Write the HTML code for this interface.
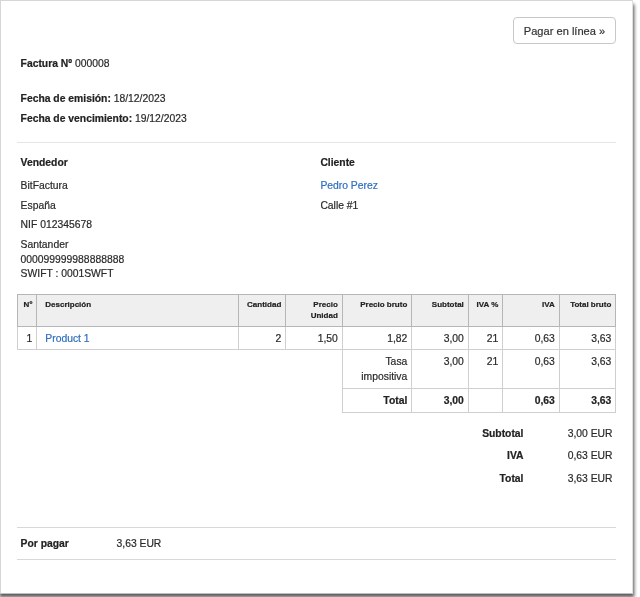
<!DOCTYPE html>
<html lang="es">
<head>
<meta charset="utf-8">
<title>Factura 000008</title>
<style>
html,body{margin:0;padding:0;background:#fff;}
body{-webkit-text-stroke:0.2px;position:relative;width:640px;height:597px;overflow:hidden;font-family:"Liberation Sans",Arial,Helvetica,sans-serif;font-size:10.35px;color:#2a2a2a;line-height:14.6px;}
.shadow{position:absolute;left:-3px;top:0;width:636px;height:594px;background:#fff;box-shadow:1.5px 3.5px 3.5px rgba(0,0,0,.65);}
.page{position:absolute;left:0;top:0;width:631px;height:592px;background:#fff;border:1px solid #d6d6d6;border-right-color:#e0e0e0;border-bottom-color:#bebebe;}
.wrap{position:absolute;left:0;top:0;width:640px;height:597px;will-change:transform;}
.abs{position:absolute;white-space:nowrap;}
b{font-weight:bold;color:#222;}
a{color:#2f6fbd;text-decoration:none;}
.btn{position:absolute;left:513px;top:17px;width:101px;height:25px;border:1px solid #c8c8c8;border-radius:4px;background:#fff;font-size:11.1px;line-height:27px;text-align:center;color:#333;}
.hr{position:absolute;left:17px;width:599px;height:1px;background:#e5e5e5;}
.hr.f{background:#d8d8d8;}
table.items{position:absolute;left:17px;top:294px;width:598px;border-collapse:collapse;table-layout:fixed;}
table.items th,table.items td{border:1px solid #cfcfcf;padding:0 3.7px 0 0;text-align:right;vertical-align:top;font-weight:normal;overflow:hidden;}
table.items th{background:#efefef;border-color:#b6b6b6;font-weight:bold;font-size:8px;line-height:10.9px;color:#222;padding-top:4.8px;}
table.items td{padding-top:4.5px;}
table.items td.l,table.items th.l{text-align:left;padding-left:8.3px;}
table.items td.none{border:none;}
table.items .p{padding-right:4.2px;}
table.items td.tasa{line-height:15px;padding-top:4.3px;}
table.items tr.tot td{font-weight:bold;color:#222;}
</style>
</head>
<body>
<div class="wrap">
<div class="shadow"></div>
<div class="page"></div>
<div class="btn">Pagar en línea »</div>

<div class="abs" style="left:20.6px;top:56.8px;"><b>Factura Nº</b> 000008</div>
<div class="abs" style="left:20.6px;top:91.7px;"><b>Fecha de emisión:</b> 18/12/2023</div>
<div class="abs" style="left:20.6px;top:111.7px;"><b>Fecha de vencimiento:</b> 19/12/2023</div>

<div class="hr" style="top:142px;"></div>

<div class="abs" style="left:20.6px;top:156.0px;"><b>Vendedor</b></div>
<div class="abs" style="left:20.6px;top:179.0px;">BitFactura</div>
<div class="abs" style="left:20.6px;top:198.8px;">España</div>
<div class="abs" style="left:20.6px;top:218.0px;">NIF 012345678</div>
<div class="abs" style="left:20.6px;top:238.2px;">Santander<br>000099999988888888<br>SWIFT : 0001SWFT</div>

<div class="abs" style="left:320.4px;top:155.8px;"><b>Cliente</b></div>
<div class="abs" style="left:320.4px;top:178.7px;"><a>Pedro Perez</a></div>
<div class="abs" style="left:320.4px;top:198.6px;">Calle #1</div>

<table class="items">
<colgroup><col style="width:19px"><col style="width:202px"><col style="width:47px"><col style="width:57px"><col style="width:69px"><col style="width:57px"><col style="width:34px"><col style="width:57px"><col style="width:56px"></colgroup>
<tr style="height:32px"><th>Nº</th><th class="l">Descripción</th><th>Cantidad</th><th class="p">Precio<br>Unidad</th><th>Precio bruto</th><th class="p">Subtotal</th><th>IVA %</th><th class="p">IVA</th><th>Total bruto</th></tr>
<tr style="height:23px"><td>1</td><td class="l"><a>Product 1</a></td><td>2</td><td class="p">1,50</td><td>1,82</td><td class="p">3,00</td><td>21</td><td class="p">0,63</td><td>3,63</td></tr>
<tr style="height:39px"><td class="none" colspan="4"></td><td class="tasa">Tasa<br>impositiva</td><td class="p">3,00</td><td>21</td><td class="p">0,63</td><td>3,63</td></tr>
<tr class="tot" style="height:24px"><td class="none" colspan="4"></td><td>Total</td><td class="p">3,00</td><td></td><td class="p">0,63</td><td>3,63</td></tr>
</table>

<div class="abs" style="right:116.5px;top:427.4px;text-align:right;"><b>Subtotal</b></div>
<div class="abs" style="right:116.5px;top:449.4px;text-align:right;"><b>IVA</b></div>
<div class="abs" style="right:116.5px;top:472.4px;text-align:right;"><b>Total</b></div>
<div class="abs" style="right:27.5px;top:427.4px;">3,00 EUR</div>
<div class="abs" style="right:27.5px;top:449.4px;">0,63 EUR</div>
<div class="abs" style="right:27.5px;top:472.4px;">3,63 EUR</div>

<div class="hr f" style="top:527px;"></div>
<div class="abs" style="left:20.6px;top:536.6px;"><b>Por pagar</b></div>
<div class="abs" style="left:116.5px;top:536.6px;">3,63 EUR</div>
<div class="hr f" style="top:559px;"></div>
</div>
</body>
</html>
